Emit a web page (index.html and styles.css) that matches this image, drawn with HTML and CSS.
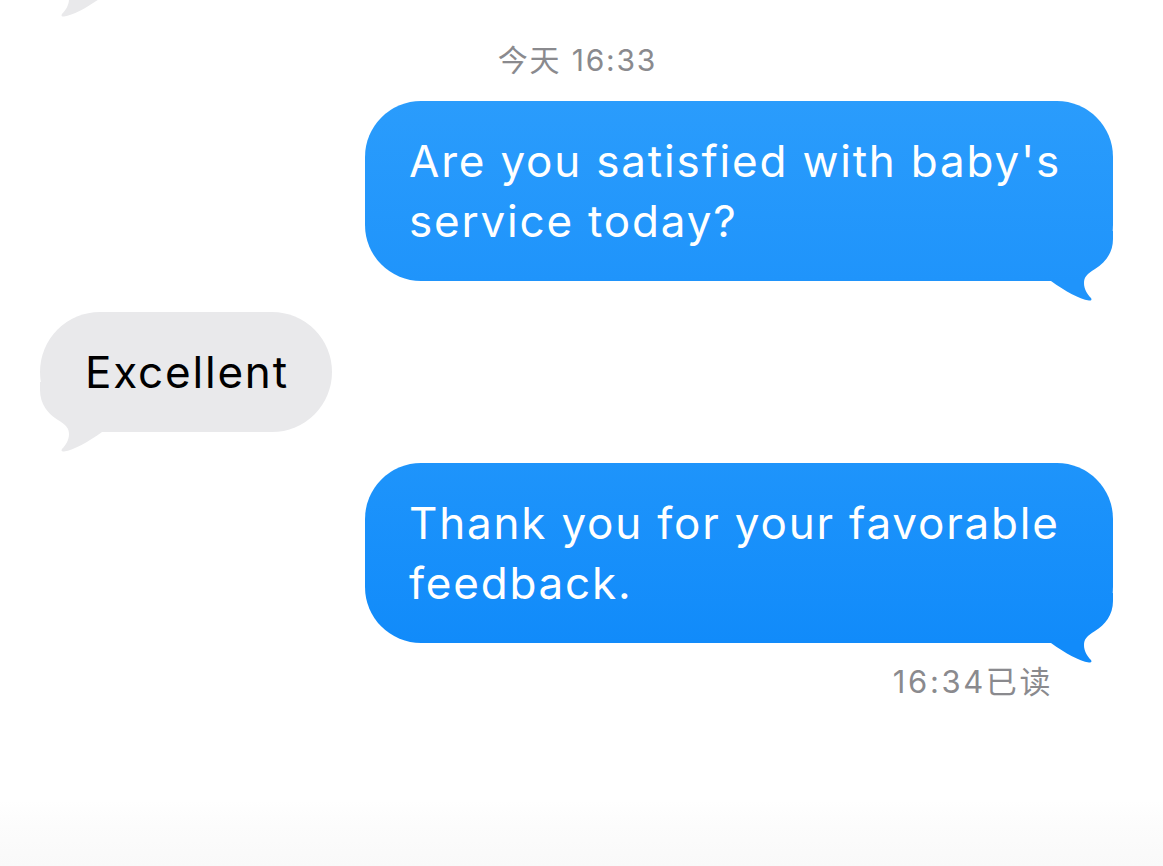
FILE: index.html
```html
<!DOCTYPE html>
<html lang="zh">
<head>
<meta charset="utf-8">
<title>Messages</title>
<link rel="stylesheet" href="styles.css">
</head>
<body>
<div class="screen">
  <div class="row in prev">
    <div class="bubble gray empty">
      <svg class="tail tail-left" viewBox="0 0 70 70" width="70" height="70"><path d="M0,0 H70 V8 C70,22 62,32 52,38 C44,43 41,46 41,52 C41,58 44,63 48,67 C49,68.5 48.5,70 46,69.5 C36,68 22,60 8,50 H0 Z" transform="translate(70,0) scale(-1,1)"/></svg>
    </div>
  </div>

  <div class="stamp">今天 16:33</div>

  <div class="row out first">
    <div class="bubble blue b1">
      <svg class="tail tail-right" viewBox="0 0 70 70" width="70" height="70">
        <defs>
          <linearGradient id="g1" gradientUnits="userSpaceOnUse" x1="0" y1="-130" x2="0" y2="50">
            <stop offset="0" stop-color="#2a9cfc"/>
            <stop offset="1" stop-color="#1f94fb"/>
          </linearGradient>
        </defs>
        <path fill="url(#g1)" d="M0,0 H70 V8 C70,22 62,32 52,38 C44,43 41,46 41,52 C41,58 44,63 48,67 C49,68.5 48.5,70 46,69.5 C36,68 22,60 8,50 H0 Z"/>
      </svg>
      <span class="text">Are you satisfied with baby's service today?</span>
    </div>
  </div>

  <div class="row in">
    <div class="bubble gray">
      <svg class="tail tail-left" viewBox="0 0 70 70" width="70" height="70"><path d="M0,0 H70 V8 C70,22 62,32 52,38 C44,43 41,46 41,52 C41,58 44,63 48,67 C49,68.5 48.5,70 46,69.5 C36,68 22,60 8,50 H0 Z" transform="translate(70,0) scale(-1,1)"/></svg>
      <span class="text">Excellent</span>
    </div>
  </div>

  <div class="row out">
    <div class="bubble blue b3">
      <svg class="tail tail-right" viewBox="0 0 70 70" width="70" height="70">
        <defs>
          <linearGradient id="g3" gradientUnits="userSpaceOnUse" x1="0" y1="-130" x2="0" y2="50">
            <stop offset="0" stop-color="#1e94fb"/>
            <stop offset="1" stop-color="#118bfa"/>
          </linearGradient>
        </defs>
        <path fill="url(#g3)" d="M0,0 H70 V8 C70,22 62,32 52,38 C44,43 41,46 41,52 C41,58 44,63 48,67 C49,68.5 48.5,70 46,69.5 C36,68 22,60 8,50 H0 Z"/>
      </svg>
      <span class="text">Thank you for your favorable feedback.</span>
    </div>
  </div>

  <div class="receipt">16:34<span class="read">已读</span></div>

  <div class="composer"></div>
</div>
</body>
</html>
```

FILE: styles.css
```css
html, body {
  margin: 0;
  padding: 0;
  background: #ffffff;
}

.screen {
  width: 1163px;
  height: 866px;
  overflow: hidden;
  display: flex;
  flex-direction: column;
  font-family: "Inter", "Liberation Sans", "Noto Sans CJK SC", sans-serif;
}

.row {
  display: flex;
}

.row.out {
  justify-content: flex-end;
  padding-right: 50px;
  margin-top: 31px;
}

.row.out.first {
  margin-top: 21px;
}

.row.in {
  justify-content: flex-start;
  padding-left: 40px;
  margin-top: 31px;
}

.row.prev {
  margin-top: -123px;
}

.bubble {
  position: relative;
  z-index: 0;
  box-sizing: border-box;
  padding: 30px 44px;
  font-size: 44px;
  line-height: 60px;
  letter-spacing: 1.8px;
}

.text {
  position: relative;
}

.bubble.blue {
  max-width: 748px;
  color: #ffffff;
  border-radius: 56px;
}

.b1 {
  background: linear-gradient(180deg, #2a9cfc 0%, #1f94fb 100%);
}

.b3 {
  background: linear-gradient(180deg, #1e94fb 0%, #118bfa 100%);
}

.bubble.gray {
  background: #e9e9eb;
  color: #000000;
  border-radius: 60px;
  padding-left: 45px;
  padding-right: 43px;
}

.bubble.empty {
  width: 290px;
  height: 120px;
}

.gray .tail path {
  fill: #e9e9eb;
}

.tail {
  position: absolute;
  z-index: -1;
  bottom: -20px;
  display: block;
}

.tail-right {
  right: 0;
}

.tail-left {
  left: 0;
}

.stamp {
  margin-top: 43px;
  height: 40px;
  line-height: 40px;
  text-align: center;
  font-size: 30px;
  color: #8a8a8e;
  letter-spacing: 1.8px;
  padding-right: 8px;
}

.receipt {
  margin-top: 19px;
  align-self: flex-end;
  margin-right: 110px;
  height: 40px;
  line-height: 40px;
  font-size: 31px;
  color: #8a8a8e;
  letter-spacing: 2.6px;
}

.read {
  margin-left: 0;
}

.composer {
  margin-top: auto;
  height: 66px;
  background: linear-gradient(180deg, #ffffff 0%, #fcfcfc 40%, #f9f9f9 100%);
}
```
